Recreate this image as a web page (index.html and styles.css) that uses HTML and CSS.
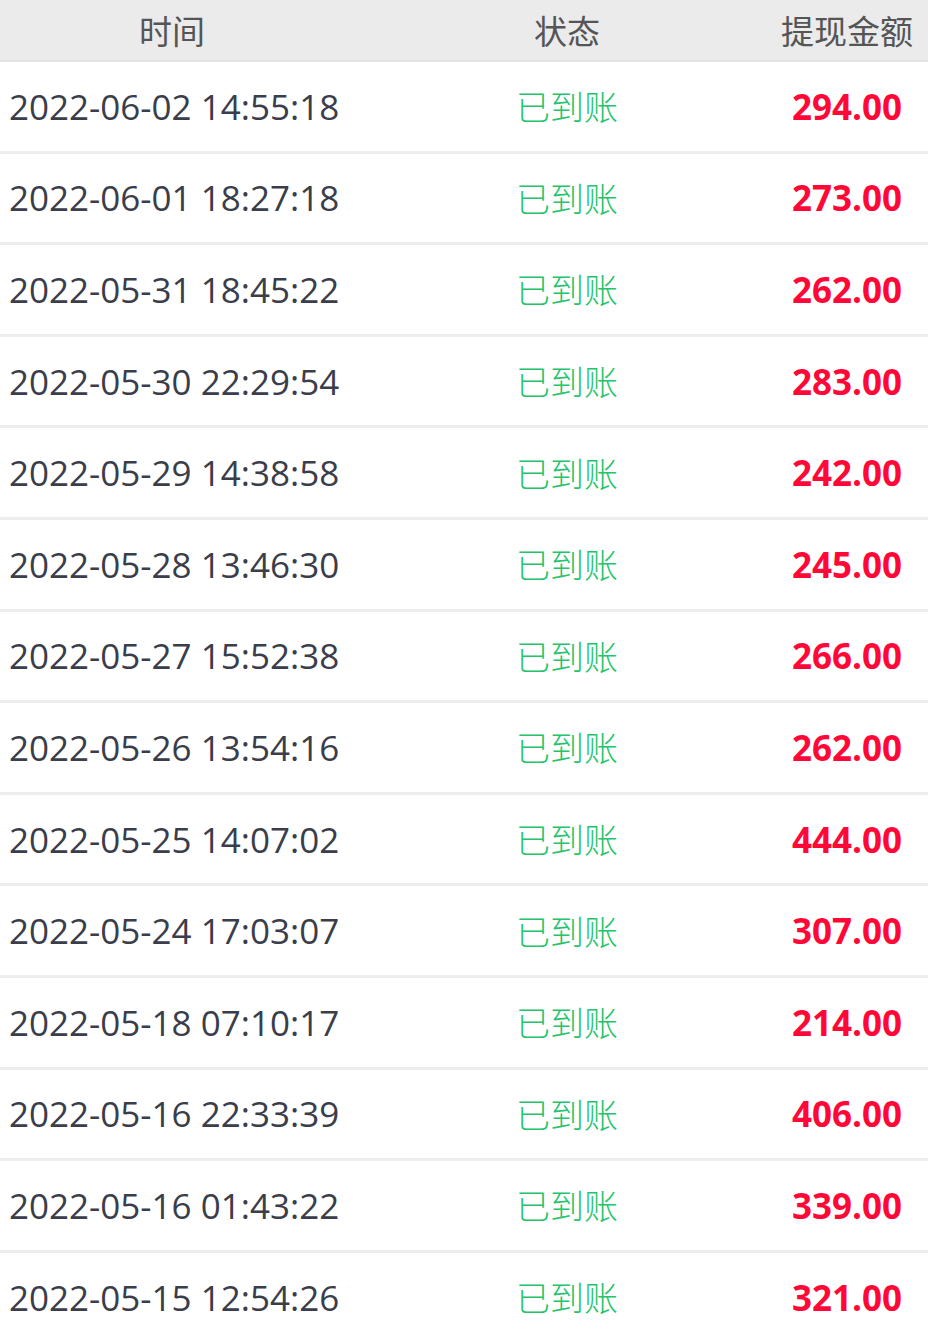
FILE: index.html
```html
<!DOCTYPE html>
<html lang="zh-CN">
<head>
<meta charset="utf-8">
<link rel="stylesheet" href="styles.css">
</head>
<body>
<div class="table">
  <div class="head">
    <div class="h1">时间</div>
    <div class="h2">状态</div>
    <div class="h3">提现金额</div>
  </div>
  <div class="row"><div class="time">2022-06-02 14:55:18</div><div class="status">已到账</div><div class="amount">294.00</div></div>
  <div class="row"><div class="time">2022-06-01 18:27:18</div><div class="status">已到账</div><div class="amount">273.00</div></div>
  <div class="row"><div class="time">2022-05-31 18:45:22</div><div class="status">已到账</div><div class="amount">262.00</div></div>
  <div class="row"><div class="time">2022-05-30 22:29:54</div><div class="status">已到账</div><div class="amount">283.00</div></div>
  <div class="row"><div class="time">2022-05-29 14:38:58</div><div class="status">已到账</div><div class="amount">242.00</div></div>
  <div class="row"><div class="time">2022-05-28 13:46:30</div><div class="status">已到账</div><div class="amount">245.00</div></div>
  <div class="row"><div class="time">2022-05-27 15:52:38</div><div class="status">已到账</div><div class="amount">266.00</div></div>
  <div class="row"><div class="time">2022-05-26 13:54:16</div><div class="status">已到账</div><div class="amount">262.00</div></div>
  <div class="row"><div class="time">2022-05-25 14:07:02</div><div class="status">已到账</div><div class="amount">444.00</div></div>
  <div class="row"><div class="time">2022-05-24 17:03:07</div><div class="status">已到账</div><div class="amount">307.00</div></div>
  <div class="row"><div class="time">2022-05-18 07:10:17</div><div class="status">已到账</div><div class="amount">214.00</div></div>
  <div class="row"><div class="time">2022-05-16 22:33:39</div><div class="status">已到账</div><div class="amount">406.00</div></div>
  <div class="row"><div class="time">2022-05-16 01:43:22</div><div class="status">已到账</div><div class="amount">339.00</div></div>
  <div class="row"><div class="time">2022-05-15 12:54:26</div><div class="status">已到账</div><div class="amount">321.00</div></div>
</div>
</body>
</html>
```

FILE: styles.css
```css
html, body {
  margin: 0;
  padding: 0;
  background: #ffffff;
}
body {
  font-family: "Open Sans", "Noto Sans CJK SC", sans-serif;
  overflow: hidden;
}
.table {
  width: 928px;
}
.head {
  display: grid;
  grid-template-columns: 344px 446px 1fr;
  align-items: center;
  height: 60px;
  background: #ebebeb;
  border-bottom: 2px solid #e2e2e2;
  color: #555555;
  font-family: "Noto Sans CJK SC", sans-serif;
  font-size: 33px;
  line-height: 1;
  white-space: nowrap;
}
.h1, .h2 { text-align: center; }
.h3 {
  margin-left: -30px;
  padding-right: 15px;
  text-align: right;
}
.row {
  display: grid;
  grid-template-columns: 344px 446px 1fr;
  align-items: center;
  height: 88.6px;
  border-bottom: 3px solid #ededed;
  line-height: 1;
  white-space: nowrap;
}
.time {
  padding-left: 9px;
  color: #3a3d4a;
  font-size: 35px;
}
.status {
  text-align: center;
  color: #24c46a;
  font-family: "Noto Sans CJK SC", sans-serif;
  font-size: 34px;
  font-weight: 300;
}
.amount {
  justify-self: end;
  margin-right: 26px;
  color: #ff0838;
  font-weight: 700;
  font-size: 35px;
}
```
